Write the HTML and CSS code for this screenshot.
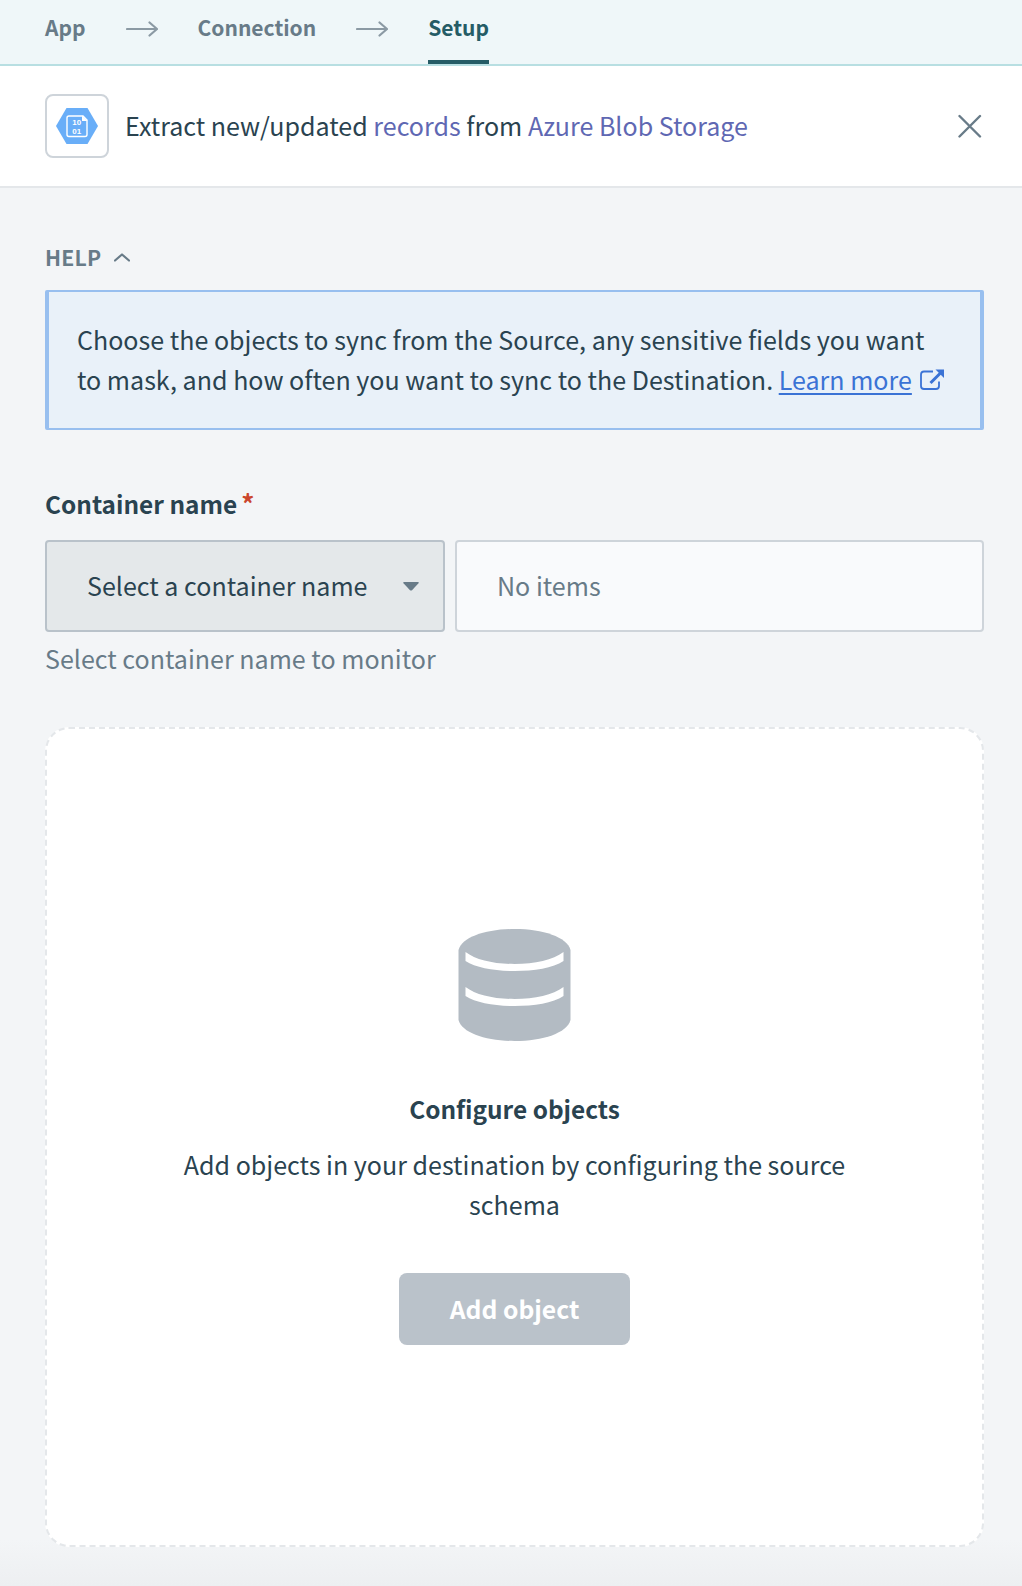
FILE: index.html
```html
<!DOCTYPE html>
<html lang="en">
<head>
  <meta charset="UTF-8">
  <meta name="viewport" content="width=device-width, initial-scale=1.0">
  <title>Setup</title>
  <link rel="stylesheet" href="styles.css">
</head>
<body>
  <nav class="steps">
    <span class="step">App</span>
    <svg class="arrow" width="32" height="16" viewBox="0 0 32 16"><path d="M1 8H31M23.500 1.500L31 8L23.500 14.500"/></svg>
    <span class="step">Connection</span>
    <svg class="arrow" width="32" height="16" viewBox="0 0 32 16"><path d="M1 8H31M23.500 1.500L31 8L23.500 14.500"/></svg>
    <span class="step active">Setup</span>
  </nav>

  <header class="header">
    <div class="app-icon">
      <svg width="42" height="36" viewBox="0 0 42 36">
        <path d="M10.500 0H31.500L42 18L31.500 36H10.500L0 18Z" fill="#69aef8"/>
        <path d="M13 8H27L31 12V26.500Q31 28.500 29 28.500H13Q11 28.500 11 26.500V10Q11 8 13 8Z" fill="none" stroke="#fff" stroke-width="1.400"/>
        <path d="M26 7.500L31.500 13H26Z" fill="#fff"/>
        <text x="16.300" y="16.900" class="bits">10</text>
        <text x="16.300" y="25.500" class="bits">01</text>
      </svg>
    </div>
    <h1 class="title">Extract new/updated <span>records</span> from <span>Azure Blob Storage</span></h1>
    <svg class="close" width="24" height="24" viewBox="0 0 24 24"><path d="M1.500 2L22 22.500M22 2L1.500 22.500"/></svg>
  </header>

  <main class="content">
    <div class="help-toggle">
      <span>HELP</span>
      <svg width="16" height="9" viewBox="0 0 16 9"><path d="M1 7.500L8 1.500L15 7.500"/></svg>
    </div>
    <div class="help">
      Choose the objects to sync from the Source, any sensitive fields you want<br>
      to mask, and how often you want to sync to the Destination. <a href="#">Learn more</a>
      <svg class="external" width="26" height="22" viewBox="0 0 26 22">
        <path d="M14 2.500H5Q2 2.500 2 5.500V17Q2 20 5 20H17Q20 20 20 17V12.500" fill="none" stroke="#3b73d5" stroke-width="1.800"/>
        <path d="M11.500 14L22 3.500" fill="none" stroke="#3b73d5" stroke-width="3"/>
        <path d="M16.500 0.500H25V9Z" fill="#3b73d5"/>
      </svg>
    </div>

    <div class="label">Container name<span class="required">*</span></div>
    <div class="field">
      <div class="select">
        <span>Select a container name</span>
        <svg width="16" height="9" viewBox="0 0 16 9"><path d="M1 0H15Q16.500 0 15.500 1.200L9 8.200Q8 9 7 8.200L0.500 1.200Q-0.500 0 1 0Z" fill="#687b88"/></svg>
      </div>
      <div class="input">No items</div>
    </div>
    <div class="hint">Select container name to monitor</div>

    <section class="empty">
      <svg class="database" width="113" height="112" viewBox="0 0 113 112">
        <path d="M0.500 21C4 8 28 0 56.500 0S109 8 112.500 21V91C109 104 85 112 56.500 112S4 104 0.500 91Z" fill="#b3bbc3"/>
        <path d="M7.500 23C18 31 36 35 56.500 35S95 31 105.500 23V32C95 39 76 42 56.500 42S18 39 7.500 32Z" fill="#fff"/>
        <path d="M7.500 58C18 66 36 70 56.500 70S95 66 105.500 58V67C95 74 76 77 56.500 77S18 74 7.500 67Z" fill="#fff"/>
      </svg>
      <h2>Configure objects</h2>
      <p>Add objects in your destination by configuring the source schema</p>
      <button class="add">Add object</button>
    </section>
  </main>
</body>
</html>
```

FILE: styles.css
```css
* {
  box-sizing: border-box;
  margin: 0;
  padding: 0;
}
body {
  height: 1586px;
  background: linear-gradient(#f3f5f7 0, #f3f5f7 1540px, #edeff1 1586px);
  color: #2a4350;
  font-family: "Noto Sans CJK SC", "Open Sans", sans-serif;
  font-size: 25.06px;
  line-height: 40px;
}
svg {
  display: block;
  flex: none;
}
.steps {
  display: flex;
  gap: 40px;
  height: 66px;
  padding-left: 45px;
  background: #eff7f9;
  border-bottom: 2px solid #b8dfe2;
  color: #687b88;
  font-size: 21px;
  font-weight: bold;
}
.step {
  height: 64px;
  line-height: 54px;
}
.step.active {
  color: #255c66;
  border-bottom: 4px solid #255c66;
  border-radius: 3px 3px 0 0;
}
.arrow {
  margin-top: 21px;
  fill: none;
  stroke: #8b9aa4;
  stroke-width: 2.2;
  stroke-linecap: round;
  stroke-linejoin: round;
}
.header {
  display: flex;
  align-items: center;
  height: 122px;
  padding: 0 40px 0 45px;
  background: #fff;
  border-bottom: 2px solid #e4e7ea;
}
.app-icon {
  display: flex;
  align-items: center;
  justify-content: center;
  width: 64px;
  height: 64px;
  border: 2px solid #ced4da;
  border-radius: 8px;
}
.bits {
  fill: #fff;
  font-family: "Liberation Sans", sans-serif;
  font-size: 8px;
  font-weight: bold;
}
.title {
  flex: 1;
  margin-left: 16px;
  padding-bottom: 2px;
  font-size: inherit;
  font-weight: normal;
}
.title span {
  color: #5f68b3;
}
.close path {
  stroke: #687b88;
  stroke-width: 2.4;
  stroke-linecap: round;
}
.content {
  padding: 49px 38px 0 45px;
}
.help-toggle {
  display: flex;
  align-items: center;
  gap: 13px;
  height: 40px;
  color: #687b88;
  font-size: 21.2px;
  font-weight: bold;
  letter-spacing: 0.25px;
}
.help-toggle path {
  fill: none;
  stroke: #687b88;
  stroke-width: 2.2;
  stroke-linecap: round;
  stroke-linejoin: round;
}
.help {
  height: 140px;
  margin-top: 13px;
  padding: 27px 0 0 28px;
  background: #e9f1f9;
  border: 2px solid #98bfef;
  border-width: 2px 4px;
  border-radius: 2px;
  white-space: nowrap;
}
.help a {
  color: #3b73d5;
  text-decoration-thickness: 2px;
  text-underline-offset: 3px;
}
.external {
  display: inline-block;
  margin: 0 0 -1px 1px;
}
.label {
  margin-top: 54px;
  font-size: 24.4px;
  font-weight: bold;
}
.required {
  margin-left: 4px;
  color: #cb462d;
  font-size: 26px;
  line-height: 0;
}
.field {
  display: flex;
  gap: 10px;
  height: 92px;
  margin-top: 16px;
}
.select, .input {
  display: flex;
  align-items: center;
  padding: 0 24px 2px 40px;
  border: 2px solid #ced4da;
  border-radius: 4px;
}
.select {
  justify-content: space-between;
  width: 400px;
  background: #e4e8ea;
  border-color: #b9c2ca;
}
.select svg {
  margin-top: 3px;
}
.input {
  flex: 1;
  background: #f9fafc;
  color: #687b88;
}
.hint {
  margin-top: 6px;
  color: #687b88;
}
.empty {
  display: flex;
  flex-direction: column;
  align-items: center;
  height: 820px;
  margin-top: 49px;
  padding-top: 200px;
  background: #fff;
  border: 2px dashed #e4e7ea;
  border-radius: 24px;
  text-align: center;
}
.empty h2 {
  margin-top: 48px;
  font-size: 24.4px;
}
.empty p {
  width: 700px;
  margin-top: 15px;
}
.add {
  width: 231px;
  height: 72px;
  margin-top: 49px;
  padding-bottom: 2px;
  background: #bac2ca;
  border: none;
  border-radius: 8px;
  color: #fff;
  font: inherit;
  font-size: 24.7px;
  font-weight: bold;
}
```
